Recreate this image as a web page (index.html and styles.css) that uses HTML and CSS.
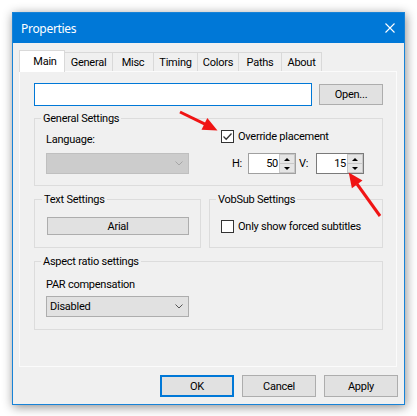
FILE: index.html
```html
<!DOCTYPE html>
<html>
<head>
<meta charset="utf-8">
<title>Properties</title>
<link rel="stylesheet" href="styles.css">
</head>
<body>
<div class="window">
  <div class="titlebar">
    <span class="title">Properties</span>
    <svg class="close" width="10" height="10" viewBox="0 0 10 10"><path d="M0.5 0.5 L9.5 9.5 M9.5 0.5 L0.5 9.5" stroke="#fff" stroke-width="1.1" fill="none"/></svg>
  </div>
  <div class="client">
    <div class="tabs">
      <div class="tab active t-main">Main</div>
      <div class="tab t-general">General</div>
      <div class="tab t-misc">Misc</div>
      <div class="tab t-timing">Timing</div>
      <div class="tab t-colors">Colors</div>
      <div class="tab t-paths">Paths</div>
      <div class="tab t-about">About</div>
    </div>
    <div class="panel">
      <div class="file-row">
        <div class="textbox"></div>
        <div class="btn btn-open">Open...</div>
      </div>

      <div class="group group-general">
        <span class="group-title">General Settings</span>
        <div class="general-cols">
          <div class="col-left">
            <div class="field-label">Language:</div>
            <div class="combo disabled">
              <span></span>
              <svg class="chev" width="8" height="5" viewBox="0 0 8 5"><path d="M0.5 0.5 L4 4 L7.5 0.5" stroke="#a6a6a6" stroke-width="1" fill="none"/></svg>
            </div>
          </div>
          <div class="col-right">
            <div class="check-row">
              <span class="checkbox"><svg width="11" height="11" viewBox="0 0 11 11"><path d="M1.5 5.5 L4.2 8.2 L9.5 2.5" stroke="#333" stroke-width="1.3" fill="none"/></svg></span>
              <span>Override placement</span>
            </div>
            <div class="spins">
              <span class="spin-label">H:</span>
              <div class="spin">
                <span class="val">50</span>
                <div class="updown"><span class="ud"><i class="tri-up"></i></span><span class="ud"><i class="tri-down"></i></span></div>
              </div>
              <span class="spin-label v-label">V:</span>
              <div class="spin spin-v">
                <span class="val">15</span>
                <div class="updown"><span class="ud"><i class="tri-up"></i></span><span class="ud"><i class="tri-down"></i></span></div>
              </div>
            </div>
          </div>
        </div>
      </div>

      <div class="group-row">
        <div class="group group-text">
          <span class="group-title">Text Settings</span>
          <div class="btn btn-font">Arial</div>
        </div>
        <div class="group group-vob">
          <span class="group-title">VobSub Settings</span>
          <div class="check-row vob-row">
            <span class="checkbox"></span>
            <span>Only show forced subtitles</span>
          </div>
        </div>
      </div>

      <div class="group group-aspect">
        <span class="group-title">Aspect ratio settings</span>
        <div class="field-label par-label">PAR compensation</div>
        <div class="combo">
          <span>Disabled</span>
          <svg class="chev" width="8" height="5" viewBox="0 0 8 5"><path d="M0.5 0.5 L4 4 L7.5 0.5" stroke="#555" stroke-width="1" fill="none"/></svg>
        </div>
      </div>
    </div>
    <div class="buttons">
      <div class="btn btn-dlg btn-default">OK</div>
      <div class="btn btn-dlg">Cancel</div>
      <div class="btn btn-dlg">Apply</div>
    </div>
  </div>
</div>
<svg class="arrows" width="417" height="416" viewBox="0 0 417 416">
  <line x1="180" y1="112" x2="205" y2="124.2" stroke="#f01414" stroke-width="3"/>
  <polygon points="217.5,130.5 201.5,129.8 207.3,118" fill="#f01414"/>
  <line x1="380" y1="216" x2="357" y2="184" stroke="#f01414" stroke-width="3"/>
  <polygon points="348.7,172.6 362.5,180.6 351.9,188.2" fill="#f01414"/>
</svg>
</body>
</html>
```

FILE: styles.css
```css
* { box-sizing: border-box; }
html, body { margin: 0; padding: 0; background: #fff; }
body {
  position: relative;
  width: 417px;
  height: 416px;
  overflow: hidden;
  font-family: Roboto, "Liberation Sans", sans-serif;
  font-size: 11px;
  line-height: 13px;
  letter-spacing: -0.25px;
  color: #000;
}
.window {
  margin: 12px 0 0 12px;
  width: 393px;
  height: 393px;
  border: 1px solid #1883d7;
  background: #f0f0f0;
  box-shadow: 1px 2px 10px rgba(0, 0, 0, 0.45);
  display: flex;
  flex-direction: column;
}
.titlebar {
  height: 30px;
  flex: none;
  background: #0078d7;
  color: #fff;
  display: flex;
  align-items: center;
  justify-content: space-between;
  padding: 0 9px 0 8px;
}
.title {
  font-family: "Noto Sans", sans-serif;
  font-size: 12px;
  letter-spacing: -0.3px;
}
.close { display: block; }
.client {
  flex: 1;
  padding: 7px 0 0 6px;
  display: flex;
  flex-direction: column;
}
.tabs {
  display: flex;
  align-items: flex-end;
  height: 21px;
  flex: none;
  position: relative;
  z-index: 1;
}
.tab {
  height: 19px;
  border: 1px solid #d9d9d9;
  border-bottom: none;
  margin-left: -1px;
  background: #f0f0f0;
  display: flex;
  align-items: center;
  justify-content: center;
}
.tab.active {
  height: 22px;
  margin-left: 0;
  margin-bottom: -1px;
  background: #fff;
  padding-left: 6px;
  padding-bottom: 1px;
}
.t-main { width: 46px; }
.t-general { width: 49px; }
.t-misc { width: 42px; }
.t-timing { width: 45px; }
.t-colors { width: 42px; }
.t-paths { width: 44px; }
.t-about { width: 41px; }

.panel {
  width: 378px;
  height: 296px;
  flex: none;
  border: 1px solid #fbfbfb;
  background: #f0f0f0;
  padding: 11px 13px 0 14px;
}
.file-row {
  display: flex;
  align-items: center;
  gap: 7px;
  height: 23px;
}
.textbox {
  flex: 1;
  height: 23px;
  border: 1px solid #0078d7;
  background: #fff;
}
.btn {
  border: 1px solid #adadad;
  background: #e1e1e1;
  display: flex;
  align-items: center;
  justify-content: center;
}
.btn-open { width: 64px; height: 21px; }

.group {
  border: 1px solid #dcdcdc;
  padding: 0 11px 11px 11px;
}
.group-title {
  display: block;
  width: max-content;
  margin: -7px 0 0 -5px;
  padding: 0 2px;
  background: #f0f0f0;
  line-height: 13px;
}
.group-general { margin-top: 12px; }
.general-cols {
  display: flex;
  gap: 32px;
}
.col-left { width: 143px; }
.field-label { margin-top: 8px; }
.combo {
  height: 21px;
  margin-top: 7px;
  border: 1px solid #adadad;
  background: #e1e1e1;
  display: flex;
  align-items: center;
  justify-content: space-between;
  padding: 0 5px 0 3px;
}
.combo.disabled {
  background: #cccccc;
  border-color: #bfbfbf;
}
.check-row {
  display: flex;
  align-items: center;
  gap: 4px;
  margin-top: 5px;
}
.checkbox {
  width: 13px;
  height: 13px;
  border: 1px solid #333;
  background: #fff;
  display: flex;
  align-items: center;
  justify-content: center;
  flex: none;
}
.spins {
  display: flex;
  align-items: center;
  margin-top: 10px;
  padding-left: 11px;
}
.spin-label { width: 16px; }
.v-label { width: 17px; margin-left: 3px; }
.spin {
  width: 48px;
  height: 21px;
  border: 1px solid #a0a0a0;
  background: #fff;
  display: flex;
}
.spin-v { border-color: #7a7a7a; }
.val {
  flex: 1;
  text-align: right;
  padding-right: 1px;
  line-height: 19px;
}
.updown {
  width: 16px;
  display: flex;
  flex-direction: column;
}
.ud {
  flex: 1;
  background: #e5e5e5;
  border: 1px solid #c8c8c8;
  display: flex;
  align-items: center;
  justify-content: center;
}
.ud + .ud { border-top: none; }
.tri-up, .tri-down {
  width: 0;
  height: 0;
  border-left: 3px solid transparent;
  border-right: 3px solid transparent;
}
.tri-up { border-bottom: 3px solid #000; }
.tri-down { border-top: 3px solid #000; }

.group-row {
  display: flex;
  gap: 8px;
  margin-top: 13px;
}
.group-text { width: 167px; padding: 0 12px 12px 12px; }
.group-vob { width: 174px; padding: 0 11px 12px 11px; }
.btn-font { width: 142px; height: 18px; margin-top: 11px; }
.vob-row { height: 18px; margin-top: 11px; }

.group-aspect { margin-top: 13px; padding-bottom: 12px; }
.par-label { margin-top: 10px; }
.group-aspect .combo { width: 143px; margin-top: 5px; }

.buttons {
  display: flex;
  justify-content: flex-end;
  gap: 8px;
  margin-top: 8px;
  padding-right: 6px;
}
.btn-dlg { width: 74px; height: 22px; }
.btn-default { border: 2px solid #0078d7; }

.arrows {
  position: absolute;
  left: 0;
  top: 0;
  pointer-events: none;
}
```
